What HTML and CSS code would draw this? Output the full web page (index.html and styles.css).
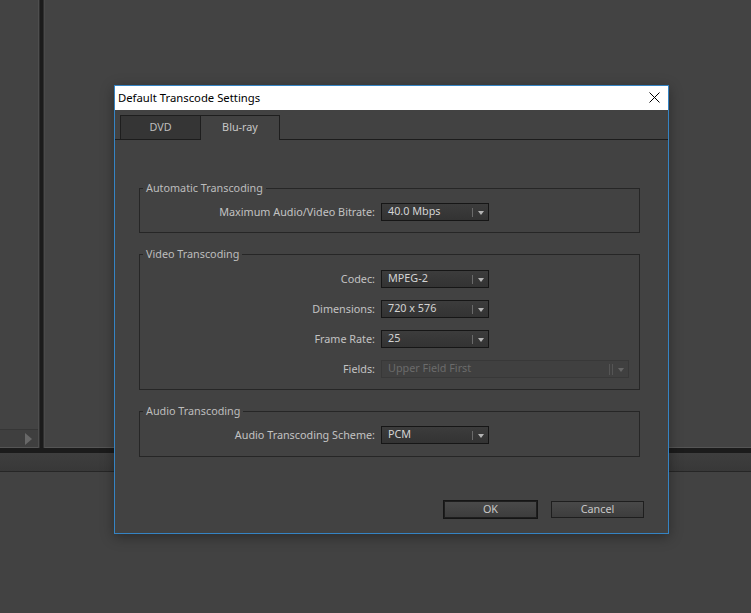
FILE: index.html
```html
<!DOCTYPE html>
<html>
<head>
<meta charset="utf-8">
<title>Default Transcode Settings</title>
<link rel="stylesheet" href="styles.css">
</head>
<body>
<div class="app">
  <div class="workspace">
    <div class="side">
      <div class="side-fill"></div>
      <div class="side-bar"><span class="play"></span></div>
    </div>
    <div class="split"></div>
    <div class="main"></div>
  </div>
  <div class="band"></div>
  <div class="strip"></div>
  <div class="rest"></div>
</div>

<div class="dialog">
  <div class="titlebar">
    <span class="title">Default Transcode Settings</span>
    <svg class="close" width="11" height="11" viewBox="0 0 11 11"><path d="M0.5 0.5L10.5 10.5M10.5 0.5L0.5 10.5" stroke="#000" stroke-width="1" fill="none"/></svg>
  </div>
  <div class="tabs">
    <div class="tab">DVD</div>
    <div class="tab active">Blu-ray</div>
  </div>
  <div class="body">
    <fieldset class="group">
      <legend>Automatic Transcoding</legend>
      <div class="row">
        <span class="label">Maximum Audio/Video Bitrate:</span>
        <div class="select"><span class="val">40.0 Mbps</span><i class="sep"></i><i class="arrow"></i></div>
      </div>
    </fieldset>
    <fieldset class="group video">
      <legend>Video Transcoding</legend>
      <div class="row">
        <span class="label">Codec:</span>
        <div class="select"><span class="val">MPEG-2</span><i class="sep"></i><i class="arrow"></i></div>
      </div>
      <div class="row">
        <span class="label">Dimensions:</span>
        <div class="select"><span class="val">720 x 576</span><i class="sep"></i><i class="arrow"></i></div>
      </div>
      <div class="row">
        <span class="label">Frame Rate:</span>
        <div class="select"><span class="val">25</span><i class="sep"></i><i class="arrow"></i></div>
      </div>
      <div class="row">
        <span class="label">Fields:</span>
        <div class="select wide disabled"><span class="val">Upper Field First</span><i class="sep"></i><i class="sep"></i><i class="arrow"></i></div>
      </div>
    </fieldset>
    <fieldset class="group audio">
      <legend>Audio Transcoding</legend>
      <div class="row">
        <span class="label">Audio Transcoding Scheme:</span>
        <div class="select"><span class="val">PCM</span><i class="sep"></i><i class="arrow"></i></div>
      </div>
    </fieldset>
    <div class="buttons">
      <button class="btn default">OK</button>
      <button class="btn">Cancel</button>
    </div>
  </div>
</div>
</body>
</html>
```
FILE: styles.css
```css
html, body {
  margin: 0;
  padding: 0;
}
body {
  width: 751px;
  height: 613px;
  overflow: hidden;
  background: #424242;
  font-family: "Noto Sans", "Open Sans", sans-serif;
  font-size: 10.8px;
  position: relative;
}

/* background application */
.app {
  display: flex;
  flex-direction: column;
  height: 613px;
}
.workspace {
  display: flex;
  height: 448px;
}
.side {
  width: 38px;
  display: flex;
  flex-direction: column;
  background: #434343;
  border-right: 1px solid #4e4e4e;
}
.side-fill {
  flex: 1;
}
.side-bar {
  height: 17px;
  border-top: 1px solid #363636;
  border-bottom: 1px solid #555;
  background: #3f3f3f;
  display: flex;
  align-items: center;
}
.play {
  margin-left: 25px;
  width: 0;
  height: 0;
  border-top: 6px solid transparent;
  border-bottom: 6px solid transparent;
  border-left: 7px solid #686868;
}
.split {
  width: 3px;
  background: #1b1b1b;
  border-left: 1px solid #2f2f2f;
  border-right: 1px solid #2f2f2f;
}
.main {
  flex: 1;
  background: #434343;
  border-left: 1px solid #4a4a4a;
  border-bottom: 1px solid #555;
}
.band {
  height: 5px;
  background: #1b1b1b;
}
.strip {
  height: 18px;
  background: linear-gradient(#3e3e3e, #383838);
  border-bottom: 1px solid #262626;
}
.rest {
  flex: 1;
  background: #424242;
}

/* dialog */
.dialog {
  position: absolute;
  left: 114px;
  top: 85px;
  width: 555px;
  height: 449px;
  box-sizing: border-box;
  border: 1px solid #3584c4;
  background: #424242;
  box-shadow: 0 3px 12px rgba(0, 0, 0, 0.35);
  display: flex;
  flex-direction: column;
}
.titlebar {
  height: 24px;
  background: #fff;
  display: flex;
  align-items: center;
  justify-content: space-between;
  padding: 0 8px 0 3px;
}
.title {
  color: #000;
  font-size: 11.3px;
  line-height: 22px;
}
.close {
  display: block;
  margin-top: -1px;
}
.tabs {
  height: 24px;
  padding: 5px 0 0 5px;
  border-bottom: 1px solid #1c1c1c;
  display: flex;
  align-items: flex-end;
}
.tab {
  box-sizing: border-box;
  height: 24px;
  width: 81px;
  border: 1px solid #1e1e1e;
  border-bottom: none;
  background: #353535;
  color: #bdbdbd;
  display: flex;
  align-items: center;
  justify-content: center;
  padding-bottom: 2px;
}
.tab.active {
  width: 79px;
  height: 25px;
  margin-bottom: -1px;
  border-left: none;
  background: #424242;
  color: #c8c8c8;
  padding-bottom: 3px;
}
.body {
  padding: 41px 28px 0 24px;
  display: flex;
  flex-direction: column;
}
.group {
  margin: 0;
  padding: 8px 0 11px 0;
  border: 1px solid #262626;
  min-width: 0;
  display: flex;
  flex-direction: column;
  gap: 12px;
}
.group + .group {
  margin-top: 14px;
}
.group.video {
  padding-top: 9px;
}
.group.audio {
  padding-bottom: 12px;
}
legend {
  margin-left: 3px;
  padding: 0 3px;
  line-height: 14px;
  color: #bdbdbd;
}
.row {
  display: grid;
  grid-template-columns: 235px auto;
  column-gap: 6px;
  align-items: center;
  justify-items: start;
}
.label {
  justify-self: end;
  color: #c3c3c3;
  line-height: 14px;
}
.select {
  box-sizing: border-box;
  width: 108px;
  height: 18px;
  border: 1px solid #161616;
  background: linear-gradient(#3c3c3c, #333333);
  display: flex;
  align-items: center;
  padding: 0 4px 0 6px;
  color: #d4d4d4;
}
.val {
  flex: 1;
  line-height: 14px;
  margin-top: -3px;
  white-space: nowrap;
}
.sep {
  display: block;
  width: 1px;
  height: 9px;
  background: #6a6a6a;
  margin-right: 5px;
}
.arrow {
  display: block;
  width: 0;
  height: 0;
  border-left: 3px solid transparent;
  border-right: 3px solid transparent;
  border-top: 4px solid #b4b4b4;
  margin-top: 1px;
}
.select.wide {
  width: 248px;
}
.select.disabled {
  border-color: #383838;
  background: #404040;
  color: #6b6b6b;
}
.select.disabled .sep {
  background: #555;
  height: 11px;
  margin-right: 2px;
}
.select.disabled .sep + .sep {
  margin-right: 5px;
}
.select.disabled .arrow {
  border-top-color: #666;
}
.buttons {
  margin-top: 44px;
  display: flex;
  justify-content: flex-end;
  gap: 14px;
  margin-right: -4px;
}
.btn {
  box-sizing: border-box;
  width: 93px;
  height: 17px;
  margin: 0;
  padding: 0 0 1px;
  border: 1px solid #1e1e1e;
  background: linear-gradient(#494949, #3d3d3d);
  color: #c8c8c8;
  font-family: "Noto Sans", "Open Sans", sans-serif;
  font-size: 10.8px;
  line-height: 14px;
}
.btn.default {
  box-shadow: 0 0 0 1px #151515;
}
```
